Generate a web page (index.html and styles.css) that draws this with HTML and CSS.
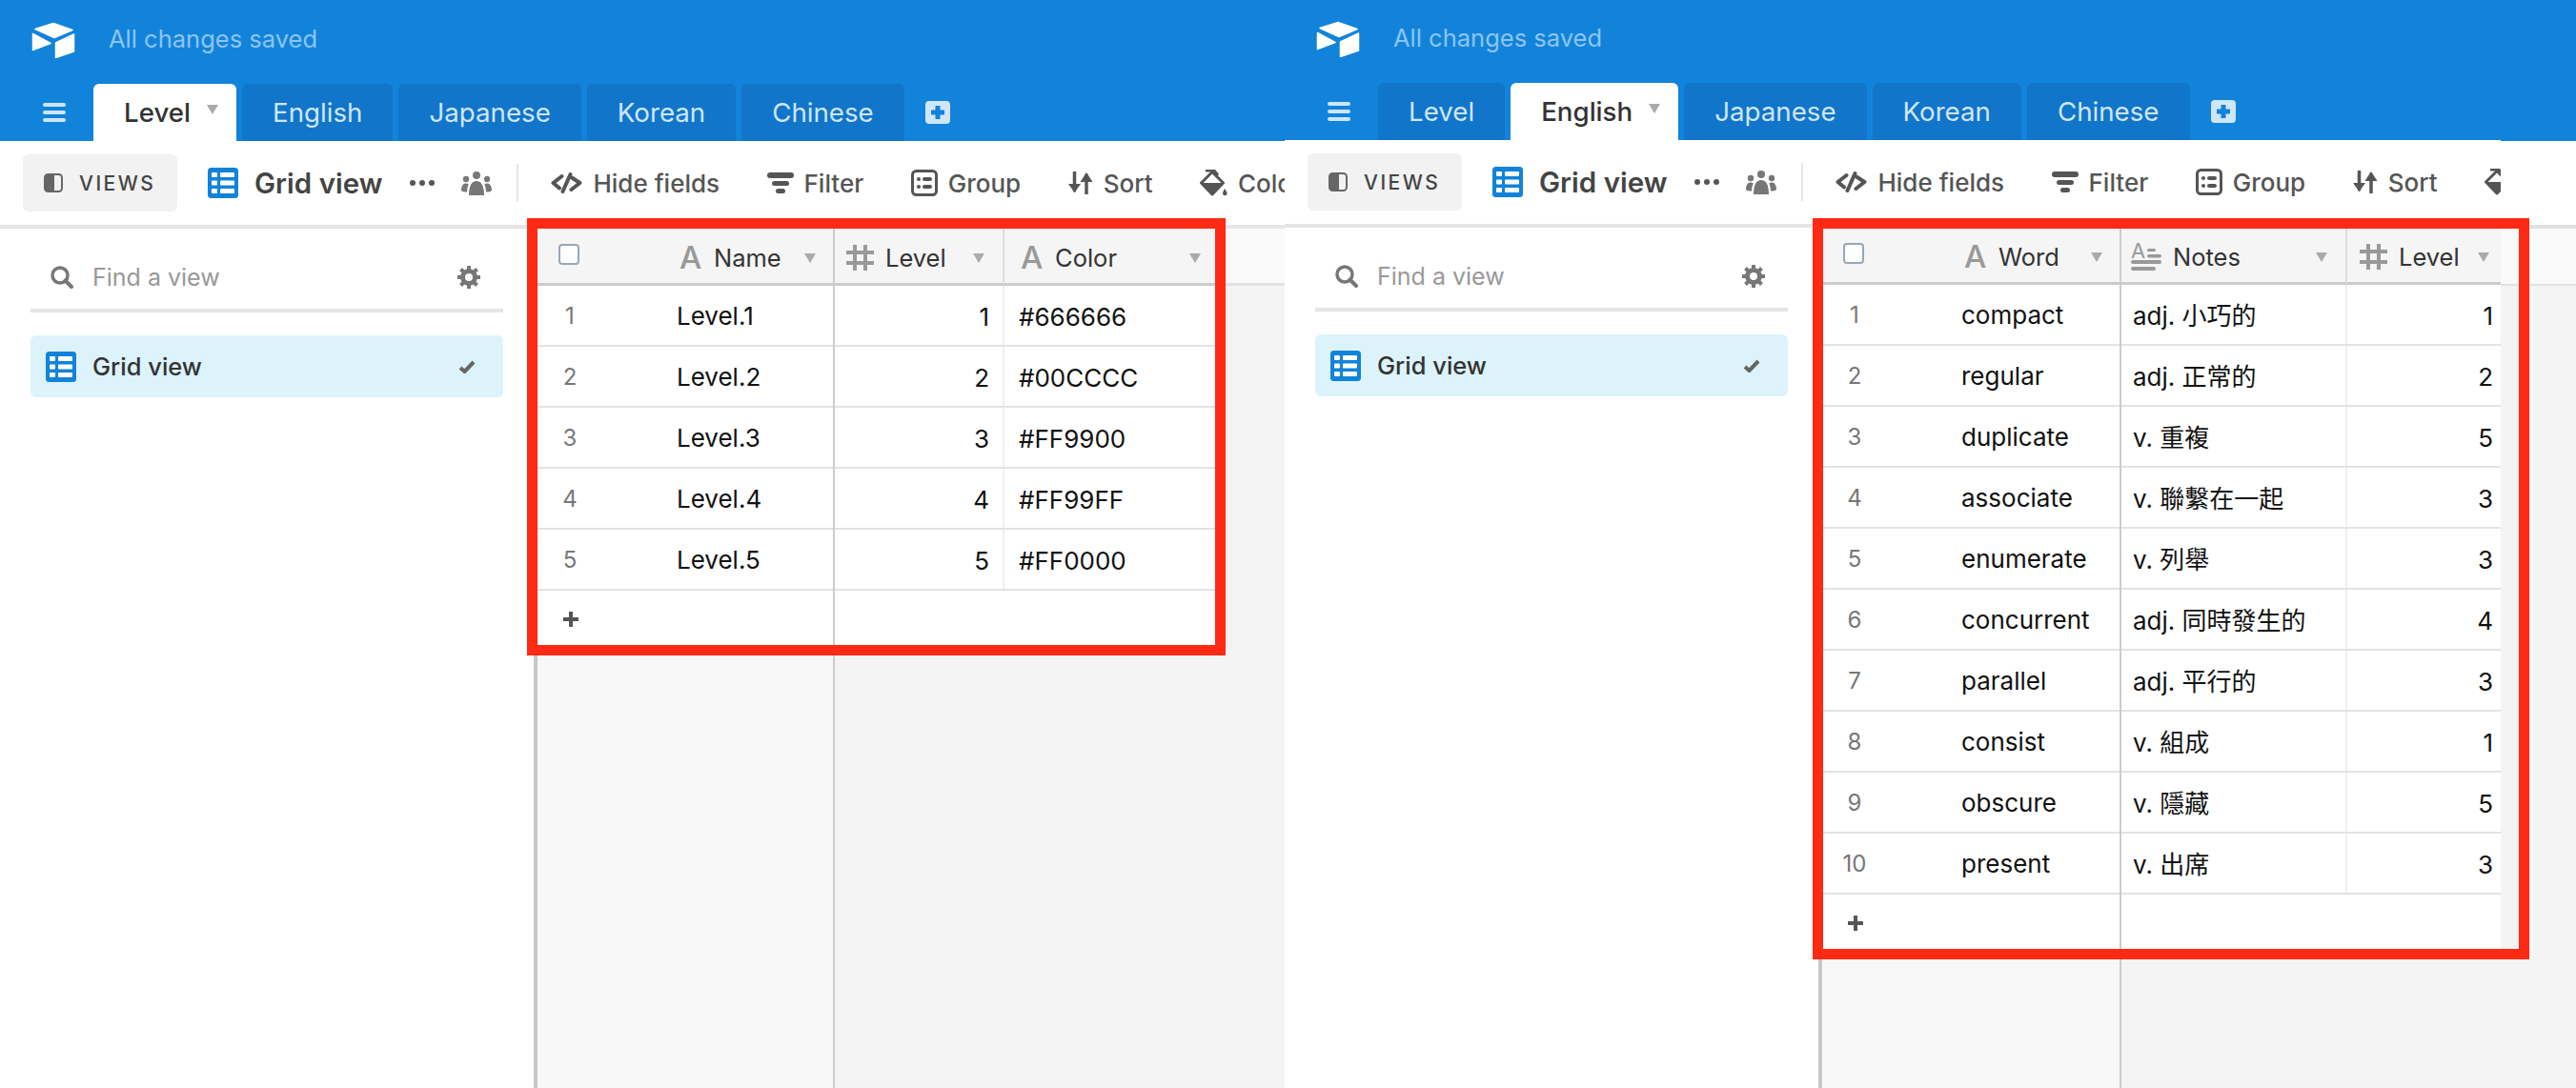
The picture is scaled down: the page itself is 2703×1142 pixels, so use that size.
FILE: index.html
```html
<!DOCTYPE html>
<html lang="en">
<head>
<meta charset="utf-8">
<title>Airtable base tables</title>
<link rel="stylesheet" href="styles.css">
</head>
<body>
<svg class="defs" width="0" height="0" aria-hidden="true">
  <symbol id="i-logo" viewBox="0 0 46 38">
    <g fill="#fff" stroke="#fff" stroke-width="1.5" stroke-linejoin="round">
      <path d="M4 7.5 23 1.5 43 8.5 24 16.5Z"/>
      <path d="M1.5 12.5 20 22.5 1.5 29.5Z"/>
      <path d="M25.5 22 44.5 13V31L25.5 37.5Z"/>
    </g>
  </symbol>
  <symbol id="i-menu" viewBox="0 0 24 20">
    <g fill="#cfe6f9"><rect y="0" width="24" height="4" rx="2"/><rect y="8" width="24" height="4" rx="2"/><rect y="16" width="24" height="4" rx="2"/></g>
  </symbol>
  <symbol id="i-plus" viewBox="0 0 26 24">
    <rect width="26" height="24" rx="4" fill="#cfe6f9"/>
    <path d="M13 5V19M6 12H20" stroke="#1283da" stroke-width="5"/>
  </symbol>
  <symbol id="i-panel" viewBox="0 0 20 20">
    <rect x="1" y="1" width="18" height="18" rx="3.5" fill="none" stroke="#666" stroke-width="2"/>
    <path d="M4 1H11V19H4A3 3 0 0 1 1 16V4A3 3 0 0 1 4 1Z" fill="#666"/>
  </symbol>
  <symbol id="i-grid" viewBox="0 0 32 32">
    <rect width="32" height="32" rx="3.5" fill="#1283da"/>
    <g fill="#fff">
      <rect x="4" y="5" width="6" height="5" rx="1"/><rect x="13" y="5" width="15" height="5" rx="1"/>
      <rect x="4" y="13.500" width="6" height="5" rx="1"/><rect x="13" y="13.500" width="15" height="5" rx="1"/>
      <rect x="4" y="22" width="6" height="5" rx="1"/><rect x="13" y="22" width="15" height="5" rx="1"/>
    </g>
  </symbol>
  <symbol id="i-people" viewBox="0 0 32 25">
    <g fill="#777">
      <circle cx="16" cy="4" r="4"/><circle cx="5" cy="8" r="3.2"/><circle cx="27" cy="8" r="3.2"/>
      <path d="M8 25C8 15 11 10 16 10S24 15 24 25Z"/>
      <path d="M0 20C0 15 2 12.5 5 12.5 6 12.5 7 13 7.800 13.600 6.800 15.500 6.200 18 6 21.500 3 21.500 1 21 0 20Z"/>
      <path d="M32 20C32 15 30 12.500 27 12.500 26 12.500 25 13 24.200 13.600 25.200 15.500 25.800 18 26 21.500 29 21.500 31 21 32 20Z"/>
    </g>
  </symbol>
  <symbol id="i-search" viewBox="0 0 24 24">
    <circle cx="10" cy="10" r="8" fill="none" stroke="#777" stroke-width="3.500"/>
    <path d="M15.500 15.500 22 22" stroke="#777" stroke-width="4" stroke-linecap="round"/>
  </symbol>
  <symbol id="i-gear" viewBox="0 0 24 24">
    <circle cx="12" cy="12" r="6.500" fill="none" stroke="#777" stroke-width="5"/>
    <path d="M12 0V5M12 19V24M0 12H5M19 12H24M3.500 3.500 7 7M17 17 20.500 20.500M3.500 20.500 7 17M17 7 20.500 3.500" stroke="#777" stroke-width="4"/>
  </symbol>
  <symbol id="i-check" viewBox="0 0 18 14">
    <path d="M2 8 6.500 12 16 2" fill="none" stroke="#666" stroke-width="4"/>
  </symbol>
  <symbol id="i-hide" viewBox="0 0 33 22">
    <g fill="none" stroke="#555" stroke-width="4" stroke-linejoin="round" stroke-linecap="round">
      <path d="M11.500 4 2.500 11 9 16.500"/>
      <path d="M22 5.500 30.500 11 21.500 18"/>
      <path d="M20.500 2 12.500 20"/>
    </g>
  </symbol>
  <symbol id="i-filter" viewBox="0 0 28 22">
    <g fill="#555"><rect width="28" height="6" rx="3"/><rect x="5" y="9" width="18" height="5" rx="2.500"/><rect x="9" y="17" width="10" height="5" rx="2.500"/></g>
  </symbol>
  <symbol id="i-group" viewBox="0 0 28 28">
    <rect x="1.500" y="1.500" width="25" height="25" rx="4" fill="none" stroke="#555" stroke-width="3"/>
    <g fill="#555"><circle cx="8" cy="10" r="2"/><circle cx="8" cy="18" r="2"/><rect x="12" y="8" width="10" height="4" rx="2"/><rect x="12" y="16" width="10" height="4" rx="2"/></g>
  </symbol>
  <symbol id="i-sort" viewBox="0 0 26 24">
    <g fill="none" stroke="#555" stroke-width="3.500" stroke-linecap="round">
      <path d="M6.500 1V20"/><path d="M19 4V23"/>
    </g>
    <path d="M0 13H13L6.500 22Z" fill="#555"/>
    <path d="M12.500 11H25.500L19 1Z" fill="#555"/>
  </symbol>
  <symbol id="i-paint" viewBox="0 0 29 28">
    <path d="M1.500 14 13 2.500 24.500 14 13 26Z" fill="none" stroke="#555" stroke-width="3" stroke-linejoin="round"/>
    <path d="M1 14H25L13 27Z" fill="#555"/>
    <path d="M6 1H15L19 6" fill="none" stroke="#555" stroke-width="3"/>
    <path d="M26 20C24.500 23 24 24 24 25A2.300 2.300 0 0 0 28.600 25C28.600 24 27.500 22 26 20Z" fill="#555"/>
  </symbol>
  <symbol id="i-hash" viewBox="0 0 29 27">
    <path d="M9 0V27M20 0V27M0 8H29M0 19H29" stroke="#999" stroke-width="4"/>
  </symbol>
  <symbol id="i-notes" viewBox="0 0 32 29">
    <text x="0" y="16" class="notes-a">A</text>
    <g fill="#999"><rect x="17" y="6" width="9" height="3" rx="1.500"/><rect x="17" y="12" width="15" height="3.500" rx="1.700"/><rect y="18" width="32" height="4" rx="2"/><rect y="25" width="26" height="4" rx="2"/></g>
  </symbol>
  <symbol id="i-add" viewBox="0 0 16 16">
    <path d="M8 0V16M0 8H16" stroke="#555" stroke-width="4"/>
  </symbol>
</svg>

<div class="page">

  <section class="pane pane-left">
    <header class="appbar">
      <div class="brand">
        <svg class="logo"><use href="#i-logo"/></svg>
        <span class="saved">All changes saved</span>
      </div>
      <nav class="tabs">
        <svg class="menu"><use href="#i-menu"/></svg>
        <div class="tab tab-active">Level<i class="caret"></i></div>
        <div class="tab">English</div>
        <div class="tab">Japanese</div>
        <div class="tab">Korean</div>
        <div class="tab">Chinese</div>
        <svg class="tab-add"><use href="#i-plus"/></svg>
      </nav>
    </header>
    <div class="toolbar">
      <div class="views-btn"><svg class="ic-panel"><use href="#i-panel"/></svg>VIEWS</div>
      <svg class="ic-grid"><use href="#i-grid"/></svg>
      <span class="view-name">Grid view</span>
      <span class="dots"><i></i><i></i><i></i></span>
      <svg class="ic-people"><use href="#i-people"/></svg>
      <span class="tool-sep"></span>
      <div class="tools">
        <div class="tool"><svg class="ic-hide"><use href="#i-hide"/></svg>Hide fields</div>
        <div class="tool"><svg class="ic-filter"><use href="#i-filter"/></svg>Filter</div>
        <div class="tool"><svg class="ic-group"><use href="#i-group"/></svg>Group</div>
        <div class="tool"><svg class="ic-sort"><use href="#i-sort"/></svg>Sort</div>
        <div class="tool"><svg class="ic-paint"><use href="#i-paint"/></svg>Color</div>
      </div>
    </div>
    <div class="body">
      <aside class="sidebar">
        <div class="find"><svg class="ic-search"><use href="#i-search"/></svg><span class="find-text">Find a view</span><svg class="ic-gear"><use href="#i-gear"/></svg></div>
        <div class="view-item"><svg class="ic-grid"><use href="#i-grid"/></svg><span class="view-item-name">Grid view</span><svg class="ic-check"><use href="#i-check"/></svg></div>
      </aside>
      <div class="frozen">
        <div class="head"><span class="head-check"><i class="checkbox"></i></span><span class="ftype">A</span><span class="fname">Name</span><i class="caret caret-end"></i></div>
        <div class="row"><span class="num">1</span><span class="primary">Level.1</span></div>
        <div class="row"><span class="num">2</span><span class="primary">Level.2</span></div>
        <div class="row"><span class="num">3</span><span class="primary">Level.3</span></div>
        <div class="row"><span class="num">4</span><span class="primary">Level.4</span></div>
        <div class="row"><span class="num">5</span><span class="primary">Level.5</span></div>
        <div class="add-row"><svg class="ic-add"><use href="#i-add"/></svg></div>
      </div>
      <div class="scroll">
        <div class="head head-band">
          <div class="hcell w-level pad-level"><svg class="ic-hash"><use href="#i-hash"/></svg><span class="fname">Level</span><i class="caret caret-end"></i></div>
          <div class="hcell w-color pad-color"><span class="ftype">A</span><span class="fname">Color</span><i class="caret caret-end"></i></div>
        </div>
        <div class="row"><div class="cell w-level cell-num">1</div><div class="cell w-color">#666666</div></div>
        <div class="row"><div class="cell w-level cell-num">2</div><div class="cell w-color">#00CCCC</div></div>
        <div class="row"><div class="cell w-level cell-num">3</div><div class="cell w-color">#FF9900</div></div>
        <div class="row"><div class="cell w-level cell-num">4</div><div class="cell w-color">#FF99FF</div></div>
        <div class="row"><div class="cell w-level cell-num">5</div><div class="cell w-color">#FF0000</div></div>
        <div class="add-row add-left"></div>
      </div>
    </div>
  </section>

  <section class="pane pane-right">
    <header class="appbar">
      <div class="brand">
        <svg class="logo"><use href="#i-logo"/></svg>
        <span class="saved">All changes saved</span>
      </div>
      <nav class="tabs">
        <svg class="menu"><use href="#i-menu"/></svg>
        <div class="tab">Level</div>
        <div class="tab tab-active">English<i class="caret"></i></div>
        <div class="tab">Japanese</div>
        <div class="tab">Korean</div>
        <div class="tab">Chinese</div>
        <svg class="tab-add"><use href="#i-plus"/></svg>
      </nav>
    </header>
    <div class="toolbar">
      <div class="views-btn"><svg class="ic-panel"><use href="#i-panel"/></svg>VIEWS</div>
      <svg class="ic-grid"><use href="#i-grid"/></svg>
      <span class="view-name">Grid view</span>
      <span class="dots"><i></i><i></i><i></i></span>
      <svg class="ic-people"><use href="#i-people"/></svg>
      <span class="tool-sep"></span>
      <div class="tools">
        <div class="tool"><svg class="ic-hide"><use href="#i-hide"/></svg>Hide fields</div>
        <div class="tool"><svg class="ic-filter"><use href="#i-filter"/></svg>Filter</div>
        <div class="tool"><svg class="ic-group"><use href="#i-group"/></svg>Group</div>
        <div class="tool"><svg class="ic-sort"><use href="#i-sort"/></svg>Sort</div>
        <div class="tool"><svg class="ic-paint"><use href="#i-paint"/></svg>Color</div>
      </div>
    </div>
    <div class="body">
      <aside class="sidebar">
        <div class="find"><svg class="ic-search"><use href="#i-search"/></svg><span class="find-text">Find a view</span><svg class="ic-gear"><use href="#i-gear"/></svg></div>
        <div class="view-item"><svg class="ic-grid"><use href="#i-grid"/></svg><span class="view-item-name">Grid view</span><svg class="ic-check"><use href="#i-check"/></svg></div>
      </aside>
      <div class="frozen">
        <div class="head"><span class="head-check"><i class="checkbox"></i></span><span class="ftype">A</span><span class="fname">Word</span><i class="caret caret-end"></i></div>
        <div class="row"><span class="num">1</span><span class="primary">compact</span></div>
        <div class="row"><span class="num">2</span><span class="primary">regular</span></div>
        <div class="row"><span class="num">3</span><span class="primary">duplicate</span></div>
        <div class="row"><span class="num">4</span><span class="primary">associate</span></div>
        <div class="row"><span class="num">5</span><span class="primary">enumerate</span></div>
        <div class="row"><span class="num">6</span><span class="primary">concurrent</span></div>
        <div class="row"><span class="num">7</span><span class="primary">parallel</span></div>
        <div class="row"><span class="num">8</span><span class="primary">consist</span></div>
        <div class="row"><span class="num">9</span><span class="primary">obscure</span></div>
        <div class="row"><span class="num">10</span><span class="primary">present</span></div>
        <div class="add-row"><svg class="ic-add"><use href="#i-add"/></svg></div>
      </div>
      <div class="scroll">
        <div class="head head-band">
          <div class="hcell w-notes pad-notes"><svg class="ic-notes"><use href="#i-notes"/></svg><span class="fname">Notes</span><i class="caret caret-end"></i></div>
          <div class="hcell w-lv pad-lv"><svg class="ic-hash"><use href="#i-hash"/></svg><span class="fname">Level</span><i class="caret caret-end"></i></div>
        </div>
        <div class="row"><div class="cell w-notes">adj. 小巧的</div><div class="cell w-lv cell-num">1</div></div>
        <div class="row"><div class="cell w-notes">adj. 正常的</div><div class="cell w-lv cell-num">2</div></div>
        <div class="row"><div class="cell w-notes">v. 重複</div><div class="cell w-lv cell-num">5</div></div>
        <div class="row"><div class="cell w-notes">v. 聯繫在一起</div><div class="cell w-lv cell-num">3</div></div>
        <div class="row"><div class="cell w-notes">v. 列舉</div><div class="cell w-lv cell-num">3</div></div>
        <div class="row"><div class="cell w-notes">adj. 同時發生的</div><div class="cell w-lv cell-num">4</div></div>
        <div class="row"><div class="cell w-notes">adj. 平行的</div><div class="cell w-lv cell-num">3</div></div>
        <div class="row"><div class="cell w-notes">v. 組成</div><div class="cell w-lv cell-num">1</div></div>
        <div class="row"><div class="cell w-notes">v. 隱藏</div><div class="cell w-lv cell-num">5</div></div>
        <div class="row"><div class="cell w-notes">v. 出席</div><div class="cell w-lv cell-num">3</div></div>
        <div class="add-row"></div>
      </div>
    </div>
  </section>

  <div class="strip">
    <div class="strip-top"></div>
    <div class="strip-bar"></div>
    <div class="strip-head"></div>
    <div class="strip-rest"></div>
  </div>

  <div class="mark mark-left"></div>
  <div class="mark mark-right"></div>
</div>
</body>
</html>
```
FILE: styles.css
```css
* { box-sizing: border-box; }
html, body { margin: 0; padding: 0; background: #fff; }
body { font-family: Inter, "Noto Sans CJK TC", sans-serif; color: #333; }
.defs { position: absolute; }
.notes-a { font-family: Inter, sans-serif; font-size: 22px; fill: #999; }
svg { display: block; flex: none; }
i { display: block; font-style: normal; }

.page { position: relative; display: flex; width: 2703px; height: 1142px; overflow: hidden; }
.pane { display: flex; flex-direction: column; flex: none; height: 100%; overflow: hidden; background: #fff; }
.pane-left { width: 1348px; }
.pane-right { width: 1276px; }

/* app bar */
.appbar { flex: none; background: #1283da; }
.brand { display: flex; align-items: center; height: 88px; padding: 0 0 8px 33px; }
.pane-right .brand { height: 87px; }
.logo { width: 46px; height: 38px; margin-top: 3px; }
.saved { margin-left: 35px; font-size: 25.500px; color: #8dc4f0; }
.tabs { display: flex; align-items: stretch; height: 60px; padding-left: 45px; gap: 6px; font-size: 27.700px; }
.menu { width: 24px; height: 20px; align-self: center; margin-right: 23px; }
.tab { display: flex; align-items: center; padding: 0 32px; border-radius: 6px 6px 0 0; background: #1175c9; color: #cfe6f9; }
.tab-active { position: relative; background: #fff; color: #333; font-weight: 500; padding-right: 19px; }
.tab-active .caret { margin: -6px 0 0 17px; }
.tab-add { width: 26px; height: 24px; align-self: center; margin: 0 0 0 16px; }

.caret { width: 0; height: 0; flex: none; border-left: 6.5px solid transparent; border-right: 6.5px solid transparent; border-top: 10px solid #aaa; }
.caret-end { margin-left: auto; }

/* toolbar */
.toolbar { flex: none; display: flex; align-items: center; height: 92px; padding: 0 0 0 24px; border-bottom: 4px solid #e5e5e5; white-space: nowrap; overflow: hidden; }
.views-btn { display: flex; align-items: center; width: 162px; height: 60px; padding-left: 22px; border-radius: 6px; background: #f2f2f2; font-size: 21px; font-weight: 500; letter-spacing: 2.500px; color: #444; flex: none; }
.ic-panel { width: 20px; height: 20px; margin-right: 17px; }
.ic-grid { width: 32px; height: 32px; }
.toolbar .ic-grid { margin-left: 32px; }
.view-name { margin-left: 17px; font-size: 29.500px; font-weight: 600; color: #444; }
.dots { display: flex; gap: 4px; margin-left: 29px; }
.dots i { width: 6px; height: 6px; border-radius: 50%; background: #555; }
.ic-people { width: 32px; height: 25px; margin-left: 28px; }
.tool-sep { width: 2px; height: 40px; margin-left: 26px; background: #e5e5e5; flex: none; }
.tools { display: flex; align-items: center; gap: 49.500px; margin-left: 34px; font-size: 26px; font-weight: 500; color: #555; }
.tool { display: flex; align-items: center; gap: 11px; }
.ic-hide { width: 33px; height: 22px; }
.ic-filter { width: 28px; height: 22px; }
.ic-group { width: 28px; height: 28px; }
.ic-sort { width: 26px; height: 24px; }
.ic-paint { width: 29px; height: 28px; }

/* body */
.body { flex: 1; display: flex; min-height: 0; }
.sidebar { flex: none; width: 564px; padding: 0 32px; border-right: 4px solid #c8c8c8; background: #fff; }
.find { display: flex; align-items: center; height: 88px; padding: 17px 24px 0 21px; border-bottom: 4px solid #e5e5e5; font-size: 25px; color: #999; }
.ic-search, .ic-gear { width: 24px; height: 24px; }
.find-text { margin-left: 20px; }
.ic-gear { margin-left: auto; }
.view-item { display: flex; align-items: center; height: 65px; margin-top: 24px; padding: 0 29px 0 16px; border-radius: 6px; background: #dcf3fc; font-size: 25.500px; font-weight: 500; color: #333; }
.view-item-name { margin-left: 17px; }
.ic-check { width: 18px; height: 14px; margin-left: auto; }

/* grid */
.frozen { flex: none; width: 312px; border-right: 2px solid #ccc; background: #f8f8f8; }
.pane-right .frozen { width: 314px; }
.scroll { flex: 1; min-width: 0; background: #f4f4f4; }
.head { display: flex; align-items: center; height: 60px; padding-right: 18px; padding-top: 4px; border-bottom: 3px solid #ccc; background: #f5f5f5; font-size: 25.500px; font-weight: 400; color: #333; }
.head-band { align-items: stretch; padding: 0; background: #fafafa; border-bottom-color: #e0e2e5; }
.head-check { display: flex; width: 149px; padding-left: 22px; }
.checkbox { width: 22px; height: 22px; margin-top: -8px; border: 2px solid #9aa7b4; border-radius: 4px; background: #fff; }
.ftype { width: 24px; font-size: 33px; font-weight: 500; line-height: 1; color: #999; flex: none; }
.fname { margin-left: 12px; }
.hcell { display: flex; align-items: center; flex: none; margin-bottom: -3px; padding-top: 4px; border-right: 2px solid #ddd; border-bottom: 3px solid #ccc; background: #f5f5f5; }
.ic-hash { width: 29px; height: 27px; }
.ic-notes { width: 32px; height: 29px; }
.pad-level { padding-left: 12px; padding-right: 19px; }
.pad-color { padding-left: 17px; padding-right: 16px; border-right: 0; }
.pad-notes { padding-left: 10px; padding-right: 19px; }
.pad-lv { padding-left: 13px; padding-right: 12px; border-right: 0; }
.w-level { width: 178px; }
.w-color { width: 222px; }
.w-notes { width: 237px; }
.w-lv { width: 161px; }

.row { display: flex; align-items: center; width: 100%; height: 64px; padding-top: 2px; border-bottom: 2px solid #e1e3e6; background: #fff; font-size: 26px; line-height: 1; color: #111; }
.scroll .row { align-items: stretch; padding-top: 0; }
.pane-left .scroll .row, .pane-left .add-left { width: 400px; }
.num { width: 68px; flex: none; font-size: 24px; text-align: center; color: #777; }
.primary { margin-left: 78px; }
.cell { display: flex; align-items: center; flex: none; padding: 3px 0 0 15px; border-right: 2px solid #f0f0f0; }
.w-notes.cell { padding-left: 12px; }
.cell:last-child { border-right: 0; }
.cell-num { justify-content: flex-end; padding: 3px 14px 0 0; }
.w-lv.cell-num { padding-right: 8px; }
.add-row { display: flex; align-items: center; height: 60px; background: #fff; }
.ic-add { width: 16px; height: 16px; margin-left: 27px; }

/* right sliver */
.strip { flex: none; width: 79px; display: flex; flex-direction: column; }
.strip-top { height: 148px; background: #1283da; }
.strip-bar { height: 92px; border-bottom: 4px solid #e0e0e0; background: #fff; }
.strip-head { height: 60px; border-bottom: 2px solid #e0e2e5; background: #fafafa; }
.strip-rest { flex: 1; background: #f4f4f4; }

/* red annotation rectangles */
.mark { position: absolute; top: 229px; border: 11px solid #ff2a14; pointer-events: none; }
.mark-left { left: 553px; width: 733px; height: 459px; }
.mark-right { left: 1902px; width: 752px; height: 778px; }
```
